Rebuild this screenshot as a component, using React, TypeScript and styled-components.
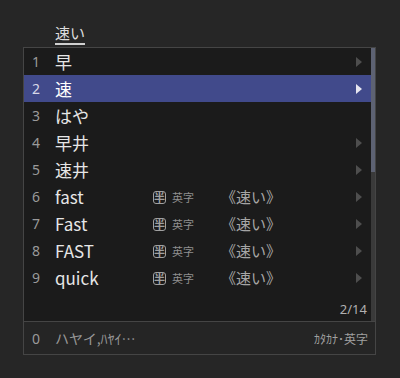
import styled, { createGlobalStyle } from "styled-components";

const GlobalStyle = createGlobalStyle`
  html, body {
    margin: 0;
    padding: 0;
    background: #262626;
  }
  body {
    font-family: "Noto Sans CJK JP", "Noto Sans", sans-serif;
    width: 400px;
    height: 378px;
    overflow: hidden;
  }
`;

const Page = styled.div`
  padding-top: 24px;
`;

const Composition = styled.div`
  margin-left: 55px;
  width: 30px;
  font-size: 15px;
  line-height: 18px;
  color: #dcdcdc;
  border-bottom: 2px solid #d0d0d0;
  padding-bottom: 1px;
`;

const Panel = styled.div`
  margin-top: 2px;
  margin-left: 23px;
  width: 351px;
  border: 1px solid #454545;
  background: #1b1b1b;
  display: flex;
  flex-direction: column;
`;

const Body = styled.div`
  display: flex;
`;

const List = styled.div`
  flex: 1;
  display: flex;
  flex-direction: column;
`;

const Row = styled.div<{ $selected?: boolean }>`
  height: 27px;
  display: flex;
  align-items: center;
  background: ${({ $selected }) => ($selected ? "#414a8b" : "transparent")};
  color: ${({ $selected }) => ($selected ? "#ffffff" : "#e6e6e6")};
`;

const Num = styled.span<{ $selected?: boolean }>`
  width: 31px;
  padding-left: 8px;
  box-sizing: border-box;
  font-family: "Noto Sans", sans-serif;
  font-size: 14px;
  color: ${({ $selected }) => ($selected ? "#d8d8e8" : "#9a9a9a")};
`;

const Word = styled.span`
  width: 98px;
  font-size: 17px;
  line-height: 27px;
`;

const Badge = styled.span`
  display: inline-flex;
  align-items: center;
  justify-content: center;
  width: 11px;
  height: 11px;
  border: 1.5px solid #a0a0a0;
  border-radius: 3px;
  font-size: 11px;
  font-weight: 700;
  line-height: 1;
  color: #a0a0a0;
  margin-right: 6px;
  margin-top: 1px;
`;

const Tag = styled.span`
  font-size: 11px;
  color: #8f8f8f;
  width: 52px;
`;

const Reading = styled.span`
  font-size: 15px;
  color: #a6a6a6;
  margin-left: -3px;
`;

const Spacer = styled.span`
  flex: 1;
`;

const Arrow = styled.span<{ $selected?: boolean }>`
  width: 0;
  height: 0;
  border-top: 5px solid transparent;
  border-bottom: 5px solid transparent;
  border-left: 6px solid ${({ $selected }) => ($selected ? "#e6e6f0" : "#4e4e4e")};
  margin-right: 9px;
`;

const Scrollbar = styled.div`
  width: 4px;
  background: #3a3a3a;
  display: flex;
  flex-direction: column;
`;

const Thumb = styled.div`
  height: 124px;
  background: #5d6273;
`;

const Count = styled.div`
  height: 30px;
  display: flex;
  justify-content: flex-end;
  align-items: flex-end;
  padding-right: 4px;
  padding-bottom: 3px;
  box-sizing: border-box;
  font-family: "Noto Sans", sans-serif;
  font-size: 13px;
  color: #b0b0b0;
`;

const Footer = styled.div`
  height: 32px;
  border-top: 1px solid #454545;
  background: #252525;
  display: flex;
  align-items: center;
  padding-right: 7px;
`;

const FooterText = styled.span`
  font-size: 14px;
  color: #979797;
`;

const FooterTag = styled.span`
  margin-left: auto;
  font-size: 12px;
  color: #a0a0a0;
`;

type Cand = { word: string; english?: boolean; arrow: boolean };

const candidates: Cand[] = [
  { word: "早", arrow: true },
  { word: "速", arrow: true },
  { word: "はや", arrow: false },
  { word: "早井", arrow: true },
  { word: "速井", arrow: true },
  { word: "fast", english: true, arrow: true },
  { word: "Fast", english: true, arrow: true },
  { word: "FAST", english: true, arrow: true },
  { word: "quick", english: true, arrow: true },
];

export default function App() {
  return (
    <Page>
      <GlobalStyle />
      <Composition>速い</Composition>
      <Panel>
        <Body>
          <List>
            {candidates.map((c, i) => {
              const sel = i === 1;
              return (
                <Row key={i} $selected={sel}>
                  <Num $selected={sel}>{i + 1}</Num>
                  <Word>{c.word}</Word>
                  {c.english && (
                    <>
                      <Badge>半</Badge>
                      <Tag>英字</Tag>
                      <Reading>《速い》</Reading>
                    </>
                  )}
                  <Spacer />
                  {c.arrow && <Arrow $selected={sel} />}
                </Row>
              );
            })}
            <Count>2/14</Count>
          </List>
          <Scrollbar>
            <Thumb />
          </Scrollbar>
        </Body>
        <Footer>
          <Num>0</Num>
          <FooterText>ハヤイ,ﾊﾔｲ…</FooterText>
          <FooterTag>ｶﾀｶﾅ･英字</FooterTag>
        </Footer>
      </Panel>
    </Page>
  );
}
